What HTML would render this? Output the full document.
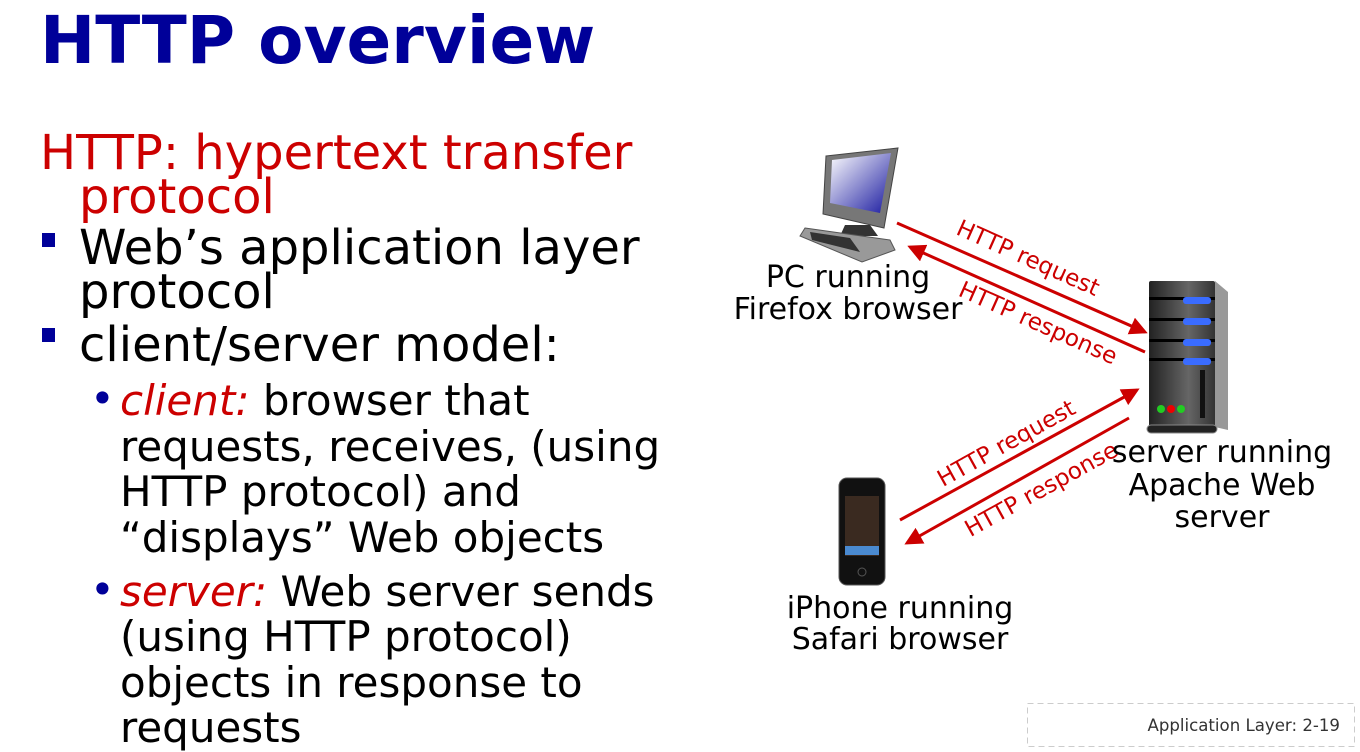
<!DOCTYPE html>
<html><head><meta charset="utf-8"><style>
body{margin:0;width:1360px;height:751px;background:#fff;position:relative;overflow:hidden;font-family:"DejaVu Sans","Liberation Sans",sans-serif;}
.t{position:absolute;white-space:nowrap;line-height:1;}
.b{font-size:48px;color:#000;}
.s{font-size:42px;color:#000;}
.r{color:#cc0000;}
.sq{position:absolute;width:13px;height:14px;background:#000099;}
.dot{position:absolute;font-size:42px;color:#000099;line-height:1;}
.lab{font-size:30px;color:#000;text-align:center;width:320px;}
</style></head><body>
<div class="t" style="left:40px;top:8px;font-size:66px;font-weight:bold;color:#000099;">HTTP overview</div>

<div class="t b r" style="left:40px;top:129px;">HTTP: hypertext transfer</div>
<div class="t b r" style="left:79px;top:173px;">protocol</div>
<div class="sq" style="left:42px;top:233px;"></div>
<div class="t b" style="left:79px;top:224px;">Web’s application layer</div>
<div class="t b" style="left:79px;top:268px;">protocol</div>
<div class="sq" style="left:42px;top:328px;"></div>
<div class="t b" style="left:79px;top:321px;">client/server model:</div>

<div class="dot" style="left:90px;top:378px;">•</div>
<div class="t s" style="left:120px;top:380px;"><i class="r">client:</i> browser that</div>
<div class="t s" style="left:120px;top:426px;">requests, receives, (using</div>
<div class="t s" style="left:120px;top:471px;">HTTP protocol) and</div>
<div class="t s" style="left:120px;top:517px;">“displays” Web objects</div>
<div class="dot" style="left:90px;top:569px;">•</div>
<div class="t s" style="left:120px;top:571px;"><i class="r">server:</i> Web server sends</div>
<div class="t s" style="left:120px;top:616px;">(using HTTP protocol)</div>
<div class="t s" style="left:120px;top:662px;">objects in response to</div>
<div class="t s" style="left:120px;top:707px;">requests</div>

<svg style="position:absolute;left:0;top:0" width="1360" height="751">
<defs>
<marker id="a" markerWidth="6" markerHeight="6" refX="5" refY="3" orient="auto"><path d="M0,0 L6,3 L0,6 Z" fill="#cc0000"/></marker>
<linearGradient id="scr" x1="0" y1="0" x2="1" y2="1"><stop offset="0" stop-color="#fff"/><stop offset="1" stop-color="#1a1aa0"/></linearGradient>
<linearGradient id="srv" x1="0" y1="0" x2="1" y2="0"><stop offset="0" stop-color="#222"/><stop offset=".6" stop-color="#666"/><stop offset="1" stop-color="#333"/></linearGradient>
</defs>
<g stroke="#cc0000" stroke-width="3" fill="none">
<line x1="897" y1="223" x2="1145" y2="332" marker-end="url(#a)"/>
<line x1="1145" y1="352" x2="910" y2="247" marker-end="url(#a)"/>
<line x1="900" y1="520" x2="1137" y2="390" marker-end="url(#a)"/>
<line x1="1129" y1="418" x2="907" y2="543" marker-end="url(#a)"/>
</g>
<g fill="#cc0000" font-family="DejaVu Sans, sans-serif" font-size="23">
<text transform="translate(1025,265) rotate(24)" text-anchor="middle">HTTP request</text>
<text transform="translate(1035,330) rotate(24)" text-anchor="middle">HTTP response</text>
<text transform="translate(1010,450) rotate(-29)" text-anchor="middle">HTTP request</text>
<text transform="translate(1045,496) rotate(-29)" text-anchor="middle">HTTP response</text>
</g>
<!-- PC -->
<path d="M826,156 L898,148 L884,228 L823,214 Z" fill="#777" stroke="#444"/>
<path d="M832,160 L891,153 L880,213 L830,203 Z" fill="url(#scr)"/>
<path d="M845,225 L870,225 L878,236 L840,236 Z" fill="#333"/>
<path d="M805,228 L890,240 L895,250 L862,262 L800,236 Z" fill="#999" stroke="#555"/>
<path d="M810,232 L850,238 L860,252 L812,240 Z" fill="#333"/>
<!-- server -->
<rect x="1149" y="281" width="66" height="146" fill="url(#srv)" rx="2"/>
<path d="M1215,281 L1228,292 L1228,430 L1215,427 Z" fill="#999"/>
<g fill="#000"><rect x="1149" y="297" width="66" height="3"/><rect x="1149" y="318" width="66" height="3"/><rect x="1149" y="339" width="66" height="3"/><rect x="1149" y="358" width="66" height="3"/></g>
<g fill="#3a6cff"><rect x="1183" y="297" width="28" height="7" rx="3"/><rect x="1183" y="318" width="28" height="7" rx="3"/><rect x="1183" y="339" width="28" height="7" rx="3"/><rect x="1183" y="358" width="28" height="7" rx="3"/></g>
<rect x="1200" y="370" width="5" height="48" fill="#111"/>
<circle cx="1161" cy="409" r="4" fill="#2c2"/><circle cx="1171" cy="409" r="4" fill="#e00"/><circle cx="1181" cy="409" r="4" fill="#2c2"/>
<rect x="1147" y="425" width="70" height="8" rx="4" fill="#222" stroke="#888"/>
<!-- iPhone -->
<rect x="839" y="478" width="46" height="107" rx="8" fill="#111" stroke="#555"/>
<rect x="845" y="496" width="34" height="60" fill="#3a2a20"/>
<rect x="845" y="546" width="34" height="9" fill="#4a8ad0"/>
<circle cx="862" cy="572" r="4" fill="none" stroke="#555"/>
<!-- footer -->
<rect x="1027.5" y="703.5" width="327" height="43" fill="none" stroke="#ccc" stroke-dasharray="6,4"/>
<text x="1340" y="731" text-anchor="end" font-family="DejaVu Sans, sans-serif" font-size="16.6" fill="#333">Application Layer: 2-19</text>
</svg>

<div class="t lab" style="left:688px;top:263px;">PC running</div>
<div class="t lab" style="left:688px;top:295px;">Firefox browser</div>
<div class="t lab" style="left:1062px;top:438px;">server running</div>
<div class="t lab" style="left:1062px;top:471px;">Apache Web</div>
<div class="t lab" style="left:1062px;top:503px;">server</div>
<div class="t lab" style="left:740px;top:594px;">iPhone running</div>
<div class="t lab" style="left:740px;top:625px;">Safari browser</div>
</body></html>
